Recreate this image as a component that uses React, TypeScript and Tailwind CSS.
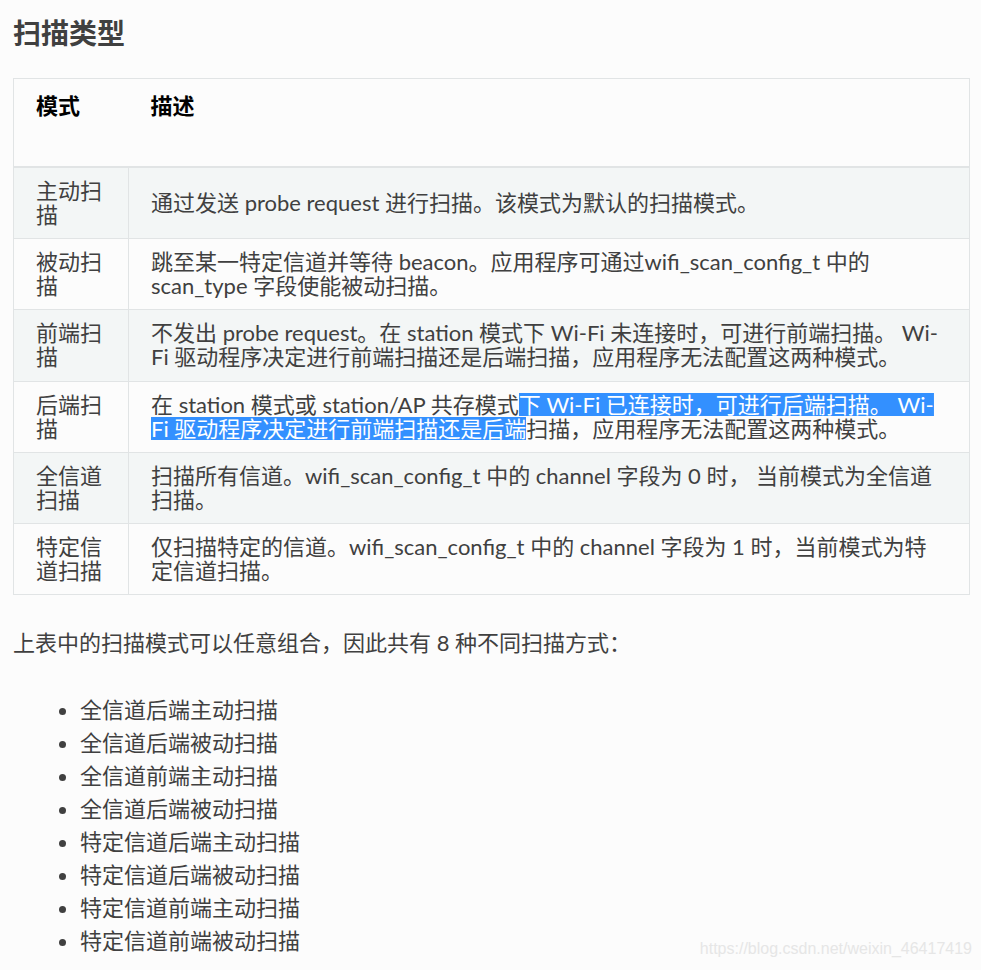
import React from "react";

const rows: { mode: string; desc: React.ReactNode }[] = [
  { mode: "主动扫描", desc: "通过发送 probe request 进行扫描。该模式为默认的扫描模式。" },
  {
    mode: "被动扫描",
    desc: "跳至某一特定信道并等待 beacon。应用程序可通过wifi_scan_config_t 中的 scan_type 字段使能被动扫描。",
  },
  {
    mode: "前端扫描",
    desc: "不发出 probe request。在 station 模式下 Wi-Fi 未连接时，可进行前端扫描。 Wi-Fi 驱动程序决定进行前端扫描还是后端扫描，应用程序无法配置这两种模式。",
  },
  {
    mode: "后端扫描",
    desc: (
      <>
        在 station 模式或 station/AP 共存模式
        <span className="box-decoration-clone bg-[linear-gradient(#3390ff,#3390ff)] bg-[length:100%_23px] bg-center bg-no-repeat text-white">
          下 Wi-Fi 已连接时，可进行后端扫描。 Wi-Fi 驱动程序决定进行前端扫描还是后端
        </span>
        扫描，应用程序无法配置这两种模式。
      </>
    ),
  },
  {
    mode: "全信道扫描",
    desc: "扫描所有信道。wifi_scan_config_t 中的 channel 字段为 0 时， 当前模式为全信道扫描。",
  },
  {
    mode: "特定信道扫描",
    desc: "仅扫描特定的信道。wifi_scan_config_t 中的 channel 字段为 1 时，当前模式为特定信道扫描。",
  },
];

const combos = [
  "全信道后端主动扫描",
  "全信道后端被动扫描",
  "全信道前端主动扫描",
  "全信道后端被动扫描",
  "特定信道后端主动扫描",
  "特定信道后端被动扫描",
  "特定信道前端主动扫描",
  "特定信道前端被动扫描",
];

export default function App() {
  return (
    <div className="relative h-[970px] overflow-hidden bg-[#fcfcfc] pl-[13px] pt-[14px] font-['Lato','Noto_Sans_CJK_SC',sans-serif] text-[#404040]">
      <h2 className="mb-[26px] text-[28px] font-bold leading-[38px]">扫描类型</h2>

      <table className="w-[957px] table-fixed border-collapse border border-[#e1e4e5] text-[22px]">
        <thead>
          <tr className="border-b-2 border-[#e1e4e5]">
            <th className="w-[115px] px-[22px] pt-[11px] pb-[44px] text-left align-top font-bold leading-[32px] text-black">
              模式
            </th>
            <th className="px-[22px] pt-[11px] pb-[44px] text-left align-top font-bold leading-[32px] text-black">
              描述
            </th>
          </tr>
        </thead>
        <tbody>
          {rows.map((r, i) => (
            <tr
              key={i}
              className={`border-t border-[#e1e4e5] ${i % 2 === 0 ? "bg-[#f3f6f6]" : "bg-[#fcfcfc]"}`}
            >
              <td className="border-r border-[#e1e4e5] px-[22px] py-[11.1px] align-middle leading-[24px]">
                {r.mode}
              </td>
              <td className="px-[22px] py-[11.1px] align-middle leading-[24px]">{r.desc}</td>
            </tr>
          ))}
        </tbody>
      </table>

      <p className="mt-[32px] text-[22px] leading-[32px]">
        上表中的扫描模式可以任意组合，因此共有 8 种不同扫描方式：
      </p>

      <ul className="mt-[34px] list-disc pl-[67px] text-[22px] leading-[33px]">
        {combos.map((c, i) => (
          <li key={i}>{c}</li>
        ))}
      </ul>

      <div className="absolute right-[9px] bottom-[9px] font-['Liberation_Sans',Arial,sans-serif] text-[16px] text-[#e6e6e6]">
        https://blog.csdn.net/weixin_46417419
      </div>
    </div>
  );
}
